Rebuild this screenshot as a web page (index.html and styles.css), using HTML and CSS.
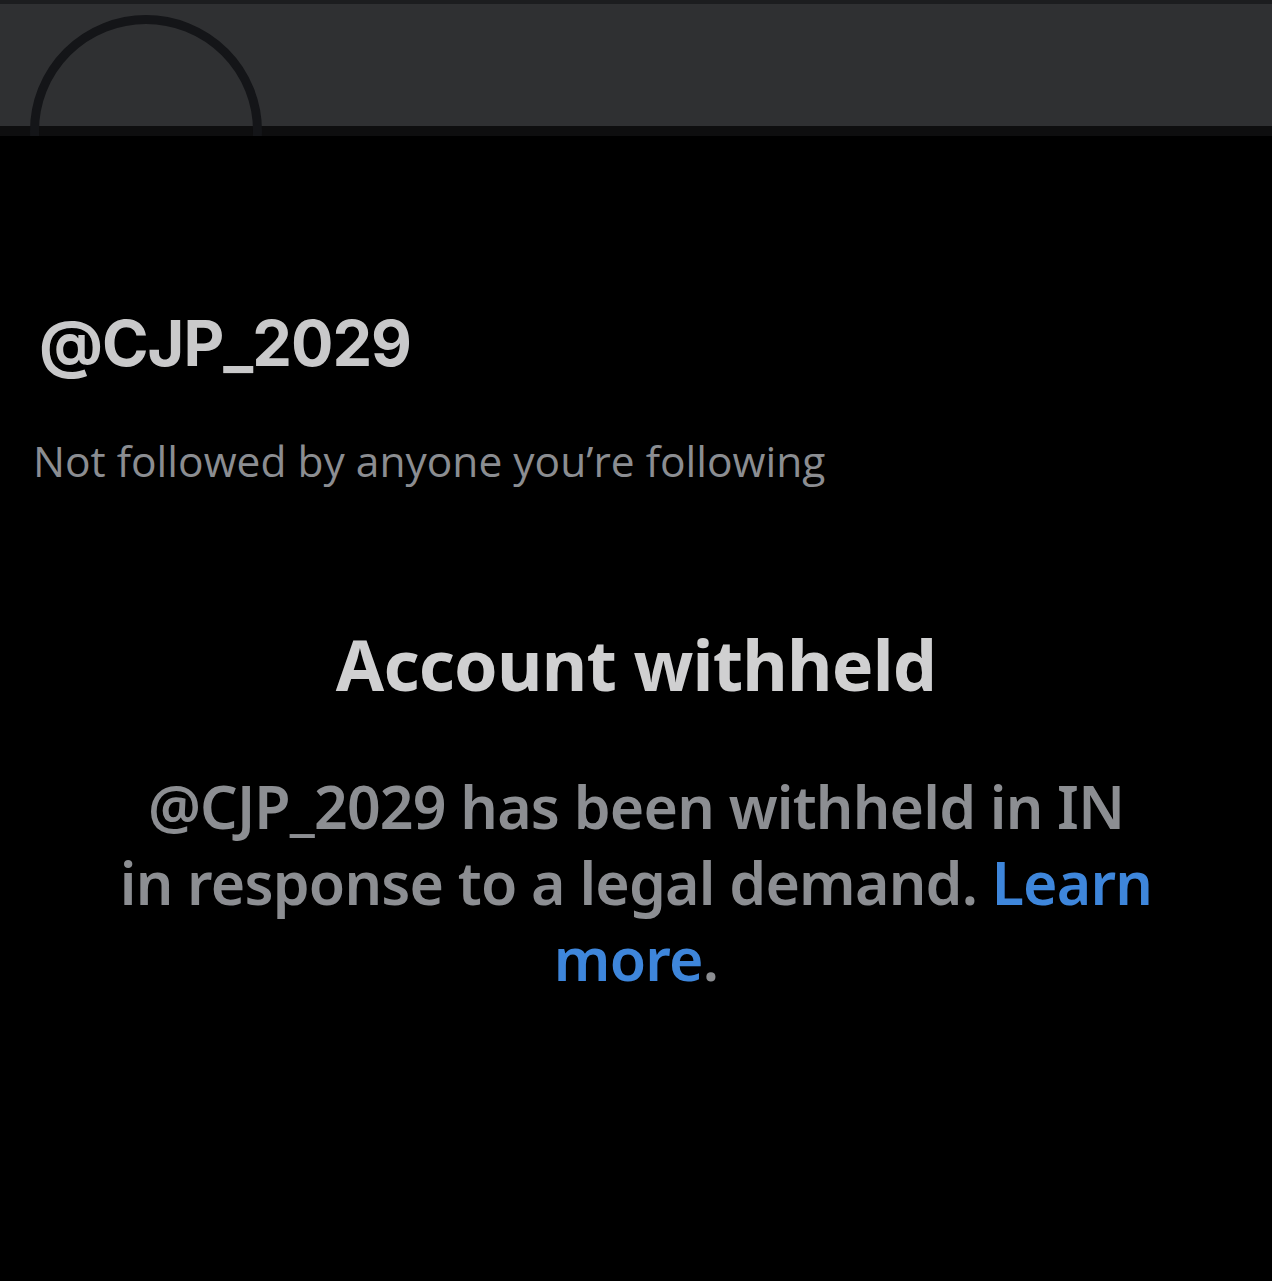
FILE: index.html
```html
<!DOCTYPE html>
<html lang="en">
<head>
<meta charset="utf-8">
<title>@CJP_2029</title>
<link rel="stylesheet" href="styles.css">
</head>
<body>
<div class="page">
  <header class="banner">
    <div class="banner-top"></div>
    <div class="banner-fill"></div>
    <div class="banner-edge"></div>
    <div class="avatar"></div>
  </header>
  <section class="profile">
    <h1 class="handle">@CJP_2029</h1>
    <p class="followers">Not followed by anyone you’re following</p>
  </section>
  <section class="withheld">
    <h2 class="withheld-title">Account withheld</h2>
    <p class="withheld-text">@CJP_2029 has been withheld in IN<br>in response to a legal demand. <a class="learn" href="#">Learn more</a>.</p>
  </section>
</div>
</body>
</html>
```
FILE: styles.css
```css
html, body {
  margin: 0;
  padding: 0;
  background: #000;
}
body {
  width: 1272px;
  height: 1281px;
  overflow: hidden;
  font-family: "Noto Sans", "Open Sans", sans-serif;
}
.page {
  display: flex;
  flex-direction: column;
}
.banner {
  position: relative;
  height: 136px;
  display: flex;
  flex-direction: column;
  overflow: hidden;
}
.banner-top {
  height: 4px;
  background: #1c1d1f;
}
.banner-fill {
  height: 122px;
  background: #2f3032;
}
.banner-edge {
  height: 10px;
  background: #0e0e0f;
}
.avatar {
  position: absolute;
  left: 30px;
  top: 15px;
  width: 214px;
  height: 214px;
  border: 9px solid #141518;
  border-radius: 50%;
  background: transparent;
}
.profile {
  padding: 0 0 0 39px;
  margin-top: 167px;
}
.handle {
  margin: 0;
  font-family: "Inter", "Liberation Sans", sans-serif;
  font-weight: 700;
  font-size: 63px;
  line-height: 80px;
  color: #c9c9ca;
  letter-spacing: -1px;
}
.followers {
  margin: 53px 0 0 -6px;
  font-family: "Open Sans", "Noto Sans", sans-serif;
  font-weight: 400;
  font-size: 42.5px;
  line-height: 50px;
  color: #8b8d91;
  letter-spacing: 0;
}
.withheld {
  display: flex;
  flex-direction: column;
  align-items: center;
  margin-top: 138px;
}
.withheld-title {
  margin: 0;
  font-weight: 700;
  font-size: 70px;
  line-height: 80px;
  color: #d0d0d1;
  letter-spacing: -0.8px;
}
.withheld-text {
  margin: 64px 0 0;
  width: 1100px;
  text-align: center;
  font-weight: 600;
  font-size: 59px;
  line-height: 76px;
  color: #8c8e92;
  letter-spacing: -0.8px;
}
.learn {
  color: #3e86db;
  text-decoration: none;
}
```
